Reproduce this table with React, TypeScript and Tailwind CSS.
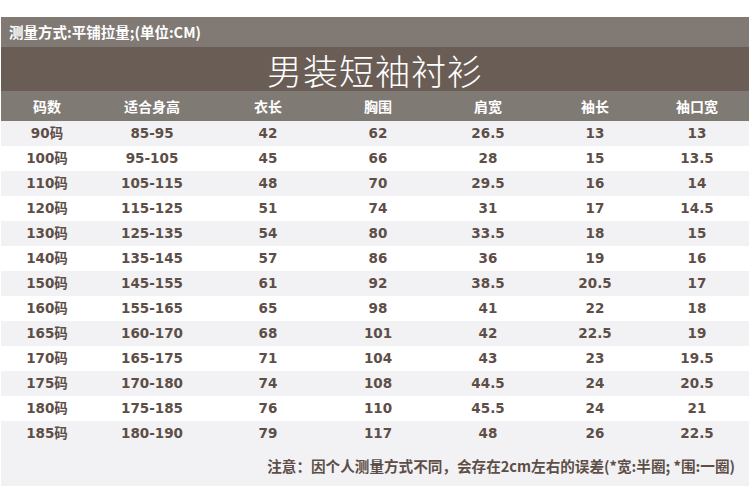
const headers = ["码数", "适合身高", "衣长", "胸围", "肩宽", "袖长", "袖口宽"];

const rows: string[][] = [
  ["90码", "85-95", "42", "62", "26.5", "13", "13"],
  ["100码", "95-105", "45", "66", "28", "15", "13.5"],
  ["110码", "105-115", "48", "70", "29.5", "16", "14"],
  ["120码", "115-125", "51", "74", "31", "17", "14.5"],
  ["130码", "125-135", "54", "80", "33.5", "18", "15"],
  ["140码", "135-145", "57", "86", "36", "19", "16"],
  ["150码", "145-155", "61", "92", "38.5", "20.5", "17"],
  ["160码", "155-165", "65", "98", "41", "22", "18"],
  ["165码", "160-170", "68", "101", "42", "22.5", "19"],
  ["170码", "165-175", "71", "104", "43", "23", "19.5"],
  ["175码", "170-180", "74", "108", "44.5", "24", "20.5"],
  ["180码", "175-185", "76", "110", "45.5", "24", "21"],
  ["185码", "180-190", "79", "117", "48", "26", "22.5"],
];

const cols = "grid grid-cols-[92px_118px_114px_106px_114px_100px_104px]";
const cjk = "font-['DejaVu_Sans','Noto_Sans_CJK_SC',sans-serif]";

export default function App() {
  return (
    <div className="h-[500px] w-[750px] bg-white pt-[17px]">
      <div className="ml-[1px] w-[748px]">
        <div className="flex h-[30px] items-center bg-[#807974] pl-[8px]">
          <span className="font-['Noto_Sans_CJK_SC',sans-serif] text-[14.5px] font-bold text-white">
            测量方式:平铺拉量;(单位:CM)
          </span>
        </div>

        <div className="flex h-[44px] items-center justify-center bg-[#6a5d55]">
          <span className="font-['Noto_Sans_CJK_SC',serif] text-[35px] font-light leading-none tracking-[1px] text-white">
            男装短袖衬衫
          </span>
        </div>

        <div className={`${cols} h-[30px] items-center bg-[#807a75]`}>
          {headers.map((h) => (
            <div key={h} className="text-center font-['Noto_Sans_CJK_SC',sans-serif] text-[14px] font-bold text-white">
              {h}
            </div>
          ))}
        </div>

        {rows.map((r, i) => (
          <div
            key={r[0]}
            className={`${cols} h-[25px] items-center ${i % 2 === 0 ? "bg-[#f2f2f4]" : "bg-white"}`}
          >
            {r.map((c, j) => (
              <div key={j} className={`text-center ${cjk} text-[13.5px] font-bold text-[#5d4e47]`}>
                {c}
              </div>
            ))}
          </div>
        ))}

        <div className="flex h-[40px] items-center justify-end bg-[#f2f2f4] pr-[14px]">
          <span className="font-['Noto_Sans_CJK_SC',sans-serif] text-[14.6px] font-semibold text-[#5d4e47]">
            注意：因个人测量方式不同，会存在2cm左右的误差(*宽:半圈; *围:一圈)
          </span>
        </div>
      </div>
    </div>
  );
}
